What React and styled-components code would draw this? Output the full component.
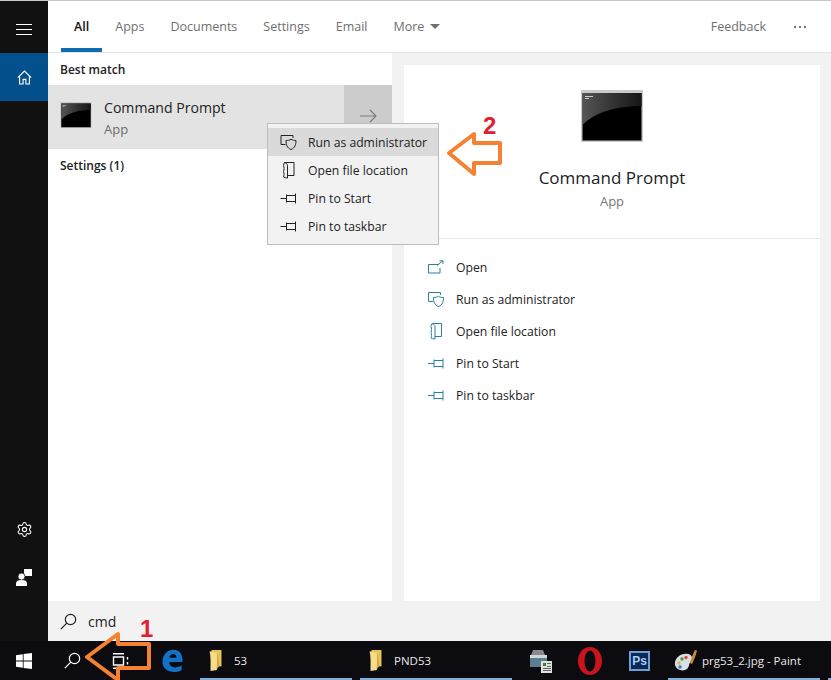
import React from 'react';
import styled, {createGlobalStyle} from 'styled-components';
import {Settings} from 'lucide-react';

const GlobalStyle = createGlobalStyle`
    html, body {
        margin: 0;
        padding: 0;
        background: #fff;
    }
    body {
        font-family: "Open Sans", "Noto Sans", "Liberation Sans", sans-serif;
    }
`;

const Screen = styled.div`
    position: relative;
    width: 831px;
    height: 680px;
    overflow: hidden;
    display: flex;
    flex-direction: column;
    border-top: 1px solid #c8c8c8;
    box-sizing: border-box;
`;

const Body = styled.div`
    flex: 1;
    display: flex;
    min-height: 0;
`;

const Sidebar = styled.aside`
    width: 48px;
    background: #111111;
    display: flex;
    flex-direction: column;
    color: #fff;
    padding-bottom: 40px;
    box-sizing: border-box;
`;

const SideButton = styled.div`
    height: 48px;
    display: flex;
    align-items: center;
    justify-content: center;
    flex-shrink: 0;
    background: ${p => p.$active ? '#04508c' : 'transparent'};
`;

const MenuButton = styled(SideButton)`
    height: 52px;
    padding-top: 5px;
    box-sizing: border-box;
`;

const SideSpacer = styled.div`
    flex: 1;
`;

const Main = styled.main`
    flex: 1;
    display: flex;
    flex-direction: column;
    min-width: 0;
`;

const TabBar = styled.nav`
    height: 52px;
    box-sizing: border-box;
    flex-shrink: 0;
    display: flex;
    align-items: stretch;
    padding-left: 13px;
    background: #fff;
    border-bottom: 1px solid #e4e4e4;
`;

const Tab = styled.div`
    position: relative;
    display: flex;
    align-items: center;
    gap: 6px;
    padding: 0 13px 1px;
    font-size: 12.5px;
    font-weight: ${p => p.$active ? 600 : 400};
    color: ${p => p.$active ? '#111' : '#6f6f6f'};
    ${p => p.$active && `
        &::after {
            content: '';
            position: absolute;
            left: 0;
            right: 0;
            bottom: 0;
            height: 4px;
            background: #0f6cb0;
        }
    `}
`;

const Caret = styled.span`
    width: 0;
    height: 0;
    border-left: 5px solid transparent;
    border-right: 5px solid transparent;
    border-top: 5px solid #6f6f6f;
`;

const TabSpacer = styled.div`
    flex: 1;
`;

const Feedback = styled.div`
    display: flex;
    align-items: center;
    font-size: 12.5px;
    color: #6f6f6f;
    margin-right: 28px;
`;

const Dots = styled.div`
    display: flex;
    align-items: center;
    gap: 3px;
    margin-right: 25px;
    & span {
        width: 2px;
        height: 2px;
        background: #777;
    }
`;

const Results = styled.div`
    flex: 1;
    display: flex;
    min-height: 0;
    background: #f2f2f2;
`;

const LeftPanel = styled.section`
    width: 344px;
    flex-shrink: 0;
    background: #fff;
`;

const SectionTitle = styled.div`
    height: 32px;
    padding-left: 12px;
    display: flex;
    align-items: center;
    font-size: 12px;
    font-weight: 600;
    color: #222;
`;

const BestMatch = styled.div`
    height: 64px;
    display: flex;
    background: #e3e3e3;
`;

const MatchMain = styled.div`
    flex: 1;
    display: flex;
    align-items: center;
    padding: 0 0 4px 12px;
    gap: 12px;
`;

const MatchText = styled.div`
    display: flex;
    flex-direction: column;
    gap: 3px;
    margin-top: 5px;
`;

const MatchName = styled.div`
    font-size: 14.1px;
    line-height: 20px;
    color: #222;
`;

const MatchKind = styled.div`
    font-size: 13px;
    line-height: 16px;
    color: #6d6d6d;
`;

const MatchArrow = styled.div`
    width: 48px;
    margin-left: 1px;
    background: #cccccc;
    display: flex;
    align-items: flex-start;
    justify-content: center;
    padding-top: 24px;
    box-sizing: border-box;
    color: #7a7a7a;
`;

const RightWrap = styled.section`
    flex: 1;
    padding: 12px 11px 0 12px;
    display: flex;
    min-width: 0;
`;

const Card = styled.div`
    flex: 1;
    background: #fff;
    display: flex;
    flex-direction: column;
`;

const Hero = styled.div`
    height: 174px;
    flex-shrink: 0;
    box-sizing: border-box;
    padding-top: 25px;
    display: flex;
    flex-direction: column;
    align-items: center;
    border-bottom: 1px solid #e8e8e8;
`;

const HeroName = styled.div`
    margin-top: 24px;
    font-size: 17px;
    line-height: 24px;
    color: #1c1c1c;
`;

const HeroKind = styled.div`
    margin-top: 2px;
    font-size: 13px;
    line-height: 18px;
    color: #777;
`;

const ActionList = styled.div`
    padding: 12px 0 0 23px;
`;

const Action = styled.div`
    height: 32px;
    display: flex;
    align-items: center;
    gap: 10px;
    font-size: 12.2px;
    color: #222;
    & svg {
        color: #2a7f9f;
        width: 19px;
        flex-shrink: 0;
    }
`;

const SearchBox = styled.div`
    height: 40px;
    flex-shrink: 0;
    background: #f2f2f2;
    display: flex;
    align-items: center;
    padding-left: 12px;
    gap: 11px;
    font-size: 14px;
    color: #222;
`;

const Taskbar = styled.footer`
    height: 39px;
    flex-shrink: 0;
    background: #0c0c10;
    display: flex;
    align-items: stretch;
    color: #fff;
`;

const TaskIcon = styled.div`
    width: ${p => p.$w || 48}px;
    margin-right: ${p => p.$gap || 0}px;
    flex-shrink: 0;
    display: flex;
    align-items: center;
    justify-content: center;
`;

const TaskApp = styled.div`
    position: relative;
    width: 152px;
    margin-right: ${p => p.$gap ?? 8}px;
    flex-shrink: 0;
    display: flex;
    align-items: center;
    padding-left: ${p => p.$pad || 9}px;
    box-sizing: border-box;
    gap: ${p => p.$iconGap || 11}px;
    font-size: 11.5px;
    color: #e8e8e8;
    &::after {
        content: '';
        position: absolute;
        left: 0;
        right: 0;
        bottom: 0;
        height: 2px;
        background: #7fb1d8;
    }
`;

const ContextMenu = styled.div`
    position: absolute;
    left: 267px;
    top: 122px;
    width: 172px;
    height: 122px;
    box-sizing: border-box;
    padding-top: 4px;
    background: #f2f2f2;
    border: 1px solid #bdbdbd;
`;

const MenuItem = styled.div`
    height: 28px;
    display: flex;
    align-items: center;
    padding-left: 11px;
    gap: 9px;
    font-size: 12.2px;
    color: #222;
    background: ${p => p.$hover ? '#dadada' : 'transparent'};
    & svg {
        width: 20px;
        flex-shrink: 0;
    }
`;

const Callout = styled.svg`
    position: absolute;
    left: ${p => p.$x}px;
    top: ${p => p.$y}px;
`;

const StepNumber = styled.div`
    position: absolute;
    left: ${p => p.$x}px;
    top: ${p => p.$y}px;
    font-family: "Liberation Sans", Arial, sans-serif;
    font-weight: 700;
    font-size: 24px;
    line-height: 24px;
    color: #e0202f;
`;

const Hamburger = () => (
    <svg width="16" height="11" viewBox="0 0 16 11" fill="none" stroke="currentColor">
        <path d="M0 .5h16M0 5.5h16M0 10.5h16"/>
    </svg>
);

const HomeIcon = () => (
    <svg width="15" height="15" viewBox="0 0 15 15" fill="none" stroke="currentColor" strokeWidth="1.1">
        <path d="M.8 7.6 7.5 1l6.7 6.6M2.6 6v8h3.5V9.4h2.8V14h3.5V6"/>
    </svg>
);

const PersonIcon = () => (
    <svg width="16" height="17" viewBox="0 0 16 17" fill="#fff">
        <rect x="8" y="0" width="8" height="7"/>
        <circle cx="5.5" cy="7.5" r="3.5" stroke="#111" strokeWidth=".8"/>
        <path d="M0 17v-2.500C0 12 2 11 5.500 11s5.500 1 5.500 3.500V17z"/>
    </svg>
);

const CmdIcon = ({w, h}) => (
    <svg width={w} height={h} viewBox="0 0 62 52">
        <defs>
            <linearGradient id="cmdGlare" x1="0" x2="1" y1="0" y2="0">
                <stop offset="0" stopColor="#555"/>
                <stop offset="1" stopColor="#151515"/>
            </linearGradient>
        </defs>
        <rect width="62" height="52" fill="#c9c9c9"/>
        <rect x="1.5" y="3" width="59" height="47.5" fill="#000"/>
        <path d="M1.5 3h59v13C36 16 14 22 1.500 35z" fill="url(#cmdGlare)"/>
        <path d="M4 6h8v1H4zM4 8h4v1H4z" fill="#ccc"/>
    </svg>
);

const ArrowRight = () => (
    <svg width="17" height="14" viewBox="0 0 17 14" fill="none" stroke="currentColor" strokeWidth="1.1">
        <path d="M0 7h16M10 1l6 6-6 6"/>
    </svg>
);

const OpenIcon = () => (
    <svg width="17" height="14" viewBox="0 0 17 14" fill="none" stroke="currentColor">
        <path d="M11 4.500H.5v8.500h11.500V8M9 5.500l5.500-4.500M11.500.8h3.500v3.200"/>
    </svg>
);

const ShieldIcon = () => (
    <svg width="17" height="15" viewBox="0 0 17 15" fill="none" stroke="currentColor">
        <path d="M5 9.500H.5V.5h12V3"/>
        <path d="M5.500 5.500c2 0 3.500-.3 5-1.300 1.500 1 3 1.300 5 1.300 0 4-1 7.500-5 9-4-1.500-5-5-5-9z"/>
    </svg>
);

const FolderIcon = () => (
    <svg width="13" height="17" viewBox="0 0 13 17" fill="none" stroke="currentColor">
        <path d="M2 .5h9.500v13H5M2 .5c1.500.5 3 1.500 3 3v12.500c-1.500 0-3-.3-4-1 .7-1.500.7-3.500 0-5.500.8-2 .8-4 0-6 .2-1 .4-2 1-3z"/>
    </svg>
);

const PinIcon = () => (
    <svg width="17" height="11" viewBox="0 0 17 11" fill="none" stroke="currentColor">
        <path d="M0 5.500h6M6 1.500v8M6 2.500h9M6 8.500h9M15 .5v10"/>
    </svg>
);

const SearchIcon = ({size = 17}) => (
    <svg width={size} height={size} viewBox="0 0 17 17" fill="none" stroke="currentColor" strokeWidth="1.2">
        <circle cx="10.5" cy="6.5" r="5.2"/>
        <path d="M6.800 10.200.8 16.200"/>
    </svg>
);

const WindowsLogo = () => (
    <svg width="16" height="16" viewBox="0 0 16 16" fill="#fff">
        <path d="M0 2.200 6.800 1.200v6.400H0zM7.600 1.100 16 0v7.600H7.600zM0 8.400h6.800v6.400L0 13.800zM7.600 8.400H16V16l-8.400-1.100z"/>
    </svg>
);

const TaskView = () => (
    <svg width="17" height="16" viewBox="0 0 17 16" fill="none" stroke="#fff" strokeWidth="1.4">
        <path d="M1 .8h11M1 15.200h11M1.500 4h10v8h-10zM15.500 4v2.500M15.500 9v2.500"/>
    </svg>
);

const EdgeIcon = () => (
    <svg width="21" height="23" viewBox="0 0 22 24">
        <path fill="#1272c8" d="M.5 13C.8 5.500 6 .8 12 .8c5.800 0 9.500 4.200 9.500 10.500v2.400H7.500c.3 3.800 2.700 5.600 6 5.600 2.600 0 5-.8 7-2.200v5c-2 1.200-4.700 1.900-7.600 1.900C6 24 .2 20 .5 13zm7.200-3.800h7.500c0-2.500-1.400-4-3.600-4-2 0-3.500 1.500-3.900 4z"/>
    </svg>
);

const FileFolder = () => (
    <svg width="14" height="21" viewBox="0 0 14 23">
        <path d="M2 0h11v18H2z" fill="#e8c25e"/>
        <path d="M0 1.500 8 3v19l-7 1c0-7 .5-14-1-21.500z" fill="#f6dd8c"/>
        <path d="M8 3c2 5 3 10 2 15l-2 3z" fill="#d9a93c"/>
    </svg>
);

const ScannerIcon = () => (
    <svg width="24" height="24" viewBox="0 0 24 24">
        <path d="M4 1h10l2 5H2z" fill="#8a8a8a"/>
        <rect x="1" y="6" width="17" height="12" fill="#5d7d93"/>
        <rect x="1" y="6" width="17" height="3" fill="#cfd6da"/>
        <rect x="12" y="12" width="11" height="12" fill="#dfe3dc"/>
        <path d="M14 14h3v3h-3z" fill="#3d7a4a"/>
        <path d="M18 14h4v1h-4zM18 17h4v1h-4zM14 19h8v1h-8zM14 21h8v1h-8z" fill="#666"/>
    </svg>
);

const OperaIcon = () => (
    <svg width="24" height="28" viewBox="0 0 24 28">
        <ellipse cx="12" cy="14" rx="12" ry="14" fill="#c9141b"/>
        <ellipse cx="12" cy="14" rx="5.5" ry="10.5" fill="#0c0c10"/>
    </svg>
);

const PsIcon = styled.div`
    width: 17px;
    height: 16px;
    border: 2px solid #6f9fd8;
    background: #0a2a55;
    color: #a9cdf5;
    font-family: "Liberation Sans", Arial, sans-serif;
    font-weight: 700;
    font-size: 12px;
    line-height: 16px;
    text-align: center;
`;

const PaintIcon = () => (
    <svg width="24" height="22" viewBox="0 0 24 22">
        <path d="M1 15C0 8 7 3 14 4c4 .6 5 4 3 7-3 4-1 5-4 8-3 2.500-10 2-12-4z" fill="#d9dfe6"/>
        <circle cx="8" cy="9" r="1.7" fill="#4c9a3c"/>
        <circle cx="12" cy="7.5" r="1.7" fill="#d84a3a"/>
        <circle cx="5" cy="13" r="1.7" fill="#e8b93a"/>
        <circle cx="6" cy="17" r="1.7" fill="#3a78c8"/>
        <path d="M23 .5 21 0c-2 4-4 8-5 13l2 1c2-4 4-9 5-13.500z" fill="#c98a3a"/>
    </svg>
);

const Callouts = () => (
    <>
        <Callout $x={446} $y={130} width="58" height="46" viewBox="0 0 58 46" fill="#fff" stroke="#f58233" strokeWidth="4" strokeLinejoin="round">
            <path d="M3 22 28 3v9h26v20H28v11z"/>
        </Callout>
        <StepNumber $x={483} $y={113}>2</StepNumber>
        <Callout $x={84} $y={630} width="70" height="50" viewBox="0 0 70 50" fill="none" stroke="#f58233" strokeWidth="4" strokeLinejoin="round">
            <path d="M3 26 34 3v10h31v24H34v12z"/>
        </Callout>
        <StepNumber $x={140} $y={616}>1</StepNumber>
    </>
);

const actions = [
    {label: 'Open', icon: <OpenIcon/>},
    {label: 'Run as administrator', icon: <ShieldIcon/>},
    {label: 'Open file location', icon: <FolderIcon/>},
    {label: 'Pin to Start', icon: <PinIcon/>},
    {label: 'Pin to taskbar', icon: <PinIcon/>},
];

const menuItems = actions.slice(1);

export default function App() {
    return (
        <Screen>
            <GlobalStyle/>
            <Body>
                <Sidebar>
                    <MenuButton><Hamburger/></MenuButton>
                    <SideButton $active><HomeIcon/></SideButton>
                    <SideSpacer/>
                    <SideButton><Settings size={17} strokeWidth={1.5}/></SideButton>
                    <SideButton><PersonIcon/></SideButton>
                </Sidebar>
                <Main>
                    <TabBar>
                        <Tab $active>All</Tab>
                        <Tab>Apps</Tab>
                        <Tab>Documents</Tab>
                        <Tab>Settings</Tab>
                        <Tab>Email</Tab>
                        <Tab>More<Caret/></Tab>
                        <TabSpacer/>
                        <Feedback>Feedback</Feedback>
                        <Dots><span/><span/><span/></Dots>
                    </TabBar>
                    <Results>
                        <LeftPanel>
                            <SectionTitle>Best match</SectionTitle>
                            <BestMatch>
                                <MatchMain>
                                    <CmdIcon w={32} h={26}/>
                                    <MatchText>
                                        <MatchName>Command Prompt</MatchName>
                                        <MatchKind>App</MatchKind>
                                    </MatchText>
                                </MatchMain>
                                <MatchArrow><ArrowRight/></MatchArrow>
                            </BestMatch>
                            <SectionTitle>Settings (1)</SectionTitle>
                        </LeftPanel>
                        <RightWrap>
                            <Card>
                                <Hero>
                                    <CmdIcon w={64} h={52}/>
                                    <HeroName>Command Prompt</HeroName>
                                    <HeroKind>App</HeroKind>
                                </Hero>
                                <ActionList>
                                    {actions.map(a => (
                                        <Action key={a.label}>{a.icon}{a.label}</Action>
                                    ))}
                                </ActionList>
                            </Card>
                        </RightWrap>
                    </Results>
                    <SearchBox>
                        <SearchIcon/>
                        <span>cmd</span>
                    </SearchBox>
                </Main>
            </Body>
            <Taskbar>
                <TaskIcon><WindowsLogo/></TaskIcon>
                <TaskIcon><SearchIcon/></TaskIcon>
                <TaskIcon><TaskView/></TaskIcon>
                <TaskIcon $w={56}><EdgeIcon/></TaskIcon>
                <TaskApp><FileFolder/>53</TaskApp>
                <TaskApp $gap={5}><FileFolder/>PND53</TaskApp>
                <TaskIcon><ScannerIcon/></TaskIcon>
                <TaskIcon $w={50}><OperaIcon/></TaskIcon>
                <TaskIcon $w={49} $gap={4}><PsIcon>Ps</PsIcon></TaskIcon>
                <TaskApp $pad={6} $iconGap={4}><PaintIcon/>prg53_2.jpg - Paint</TaskApp>
                <TaskApp/>
            </Taskbar>
            <ContextMenu>
                {menuItems.map((item, i) => (
                    <MenuItem key={item.label} $hover={i === 0}>{item.icon}{item.label}</MenuItem>
                ))}
            </ContextMenu>
            <Callouts/>
        </Screen>
    );
}
